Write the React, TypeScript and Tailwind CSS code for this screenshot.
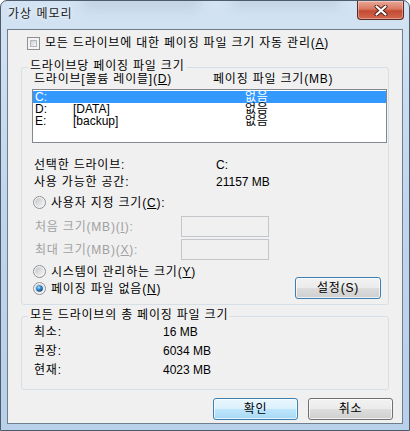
import React from "react";

const Radio = ({ checked = false }: { checked?: boolean }) => (
  <svg width="13" height="13" viewBox="0 0 13 13" className="shrink-0">
    <defs>
      <linearGradient id="rbIn" x1="0" y1="0" x2="1" y2="1">
        <stop offset="0" stopColor="#c3c6ca" />
        <stop offset="1" stopColor="#f7f7f7" />
      </linearGradient>
      <radialGradient id="rbDot" cx="0.4" cy="0.35" r="0.7">
        <stop offset="0" stopColor="#b9e3fb" />
        <stop offset="0.45" stopColor="#2a8ad4" />
        <stop offset="1" stopColor="#0f3f73" />
      </radialGradient>
    </defs>
    <circle cx="6.5" cy="6.5" r="6" fill="#f6f6f6" stroke="#8c8e90" />
    <circle cx="6.5" cy="6.5" r="4.5" fill="url(#rbIn)" />
    {checked && <circle cx="6.5" cy="6.5" r="3.3" fill="url(#rbDot)" />}
  </svg>
);

const Checkbox = () => (
  <div className="w-[13px] h-[13px] shrink-0 border border-[#8e8f8f] bg-[#f4f4f4] p-[2px]">
    <div className="w-full h-full border border-[#b3b8bd] bg-gradient-to-br from-[#cbcfd5] to-[#f7f7f7]" />
  </div>
);

const Mn = ({ children }: { children: React.ReactNode }) => (
  <span className="underline underline-offset-[1px]">{children}</span>
);

const Group = ({
  label,
  className,
  children,
}: {
  label: string;
  className: string;
  children: React.ReactNode;
}) => (
  <div className={`relative ml-[13px] w-[368px] border border-[#d5dfe5] rounded-[3px] ${className}`}>
    <span className="absolute left-[6px] top-[-8px] px-[2px] bg-[#f0f0f0] leading-[13px]">
      {label}
    </span>
    {children}
  </div>
);

const WinButton = ({
  children,
  variant = "normal",
  className = "",
}: {
  children: React.ReactNode;
  variant?: "normal" | "default" | "focus";
  className?: string;
}) => {
  const border =
    variant === "normal" ? "border-[#707070]" : "border-[#3c7fb1]";
  const fill =
    variant === "default"
      ? "bg-[linear-gradient(#eaf6fd_0%,#d9f0fc_50%,#bee6fd_51%,#a7d9f5_100%)]"
      : "bg-[linear-gradient(#f2f2f2_0%,#ebebeb_50%,#dddddd_51%,#cfcfcf_100%)]";
  return (
    <button
      className={`h-[22px] w-[85px] rounded-[3px] border ${border} ${fill} shadow-[inset_0_0_0_1px_rgba(255,255,255,0.7)] leading-[20px] text-center text-black ${className}`}
    >
      {children}
    </button>
  );
};

export default function App() {
  return (
    <div className="relative w-[410px] h-[431px] overflow-hidden rounded-t-[7px] border border-[#4d5b6b] bg-gradient-to-b from-[#d3e3f3] via-[#bfd5ec] to-[#b8d0e9] font-['Liberation_Sans','Noto_Sans_CJK_KR',sans-serif] text-[12px] tracking-[0.8px] text-black flex flex-col">
      <div className="absolute left-[80px] top-[-6px] w-[120px] h-[14px] rounded-full bg-[#9aa8b8] opacity-30 blur-[6px]" />
      <div className="absolute left-[230px] top-[-6px] w-[110px] h-[12px] rounded-full bg-[#9aa8b8] opacity-30 blur-[6px]" />

      {/* title bar */}
      <div className="relative flex h-[28px] items-start justify-between">
        <span className="pl-[7px] pt-[6px] leading-[14px] tracking-[1px] text-[#1a1a1a] [text-shadow:0_0_6px_#ffffff]">
          가상 메모리
        </span>
        <div className="mr-[5px] flex h-[19px] w-[47px] items-center justify-center rounded-b-[4px] border border-t-0 border-[#5a2a24] bg-[linear-gradient(#e9a99a_0%,#d9775f_45%,#c44a34_55%,#d3684e_100%)] shadow-[inset_0_0_0_1px_rgba(255,255,255,0.35)]">
          <svg width="14" height="11" viewBox="0 0 14 11">
            <path d="M2.5 1.5 L11.5 9.5 M11.5 1.5 L2.5 9.5" stroke="#4a1f1a" strokeWidth="4" strokeLinecap="round" />
            <path d="M2.5 1.5 L11.5 9.5 M11.5 1.5 L2.5 9.5" stroke="#ffffff" strokeWidth="2.2" strokeLinecap="round" />
          </svg>
        </div>
      </div>

      {/* client area */}
      <div className="ml-[6px] w-[396px] h-[395px] border border-[#6f7d8d] bg-[#f0f0f0] flex flex-col">
        <div className="mt-[7px] flex h-[13px] items-center gap-[5px] pl-[19px]">
          <Checkbox />
          <span className="leading-[13px]">
            모든 드라이브에 대한 페이징 파일 크기 자동 관리(<Mn>A</Mn>)
          </span>
        </div>

        <Group label="드라이브당 페이징 파일 크기" className="mt-[17px] h-[238px]">
          <div className="flex pt-[5px] pl-[12px] leading-[13px]">
            <span className="w-[179px]">
              드라이브[볼륨 레이블](<Mn>D</Mn>)
            </span>
            <span>페이징 파일 크기(MB)</span>
          </div>

          <div className="mt-[3px] ml-[10px] w-[355px] h-[54px] border border-[#828790] bg-white pt-[1px] leading-[12px]">
            {[
              ["C:", "", "없음"],
              ["D:", "[DATA]", "없음"],
              ["E:", "[backup]", "없음"],
            ].map(([d, l, s], i) => (
              <div
                key={d}
                className={`flex h-[12px] pl-[2px] tracking-normal ${i === 0 ? "bg-[#3399ff] text-white" : ""}`}
              >
                <span className="w-[38px]">{d}</span>
                <span className="w-[172px]">{l}</span>
                <span className="tracking-[0.8px]">{s}</span>
              </div>
            ))}
          </div>

          <div className="mt-[14px] pl-[12px] leading-[17px]">
            <div className="flex">
              <span className="w-[182px]">선택한 드라이브:</span>
              <span className="tracking-normal">C:</span>
            </div>
            <div className="flex">
              <span className="w-[182px]">사용 가능한 공간:</span>
              <span className="tracking-normal">21157 MB</span>
            </div>
          </div>

          <div className="mt-[3px] flex h-[17px] items-center gap-[5px] pl-[11px]">
            <Radio />
            <span>
              사용자 지정 크기(<Mn>C</Mn>):
            </span>
          </div>

          <div className="mt-[5px] flex h-[21px] items-center pl-[13px] text-[#a0a0a0]">
            <span className="w-[146px]">
              처음 크기(MB)(<Mn>I</Mn>):
            </span>
            <div className="h-[21px] w-[88px] border border-[#c3c6cb] bg-[#f0f0f0]" />
          </div>
          <div className="mt-[2px] flex h-[21px] items-center pl-[13px] text-[#a0a0a0]">
            <span className="w-[146px]">
              최대 크기(MB)(<Mn>X</Mn>):
            </span>
            <div className="h-[21px] w-[88px] border border-[#c3c6cb] bg-[#f0f0f0]" />
          </div>

          <div className="mt-[3px] flex items-start">
            <div className="flex flex-col pl-[11px]">
              <div className="flex h-[17px] items-center gap-[5px]">
                <Radio />
                <span>
                  시스템이 관리하는 크기(<Mn>Y</Mn>)
                </span>
              </div>
              <div className="flex h-[17px] items-center gap-[5px]">
                <Radio checked />
                <span>
                  페이징 파일 없음(<Mn>N</Mn>)
                </span>
              </div>
            </div>
            <WinButton variant="focus" className="ml-auto mr-[7px] mt-[14px] h-[21px] w-[86px]">
              설정(S)
            </WinButton>
          </div>
        </Group>

        <Group label="모든 드라이브의 총 페이징 파일 크기" className="mt-[11px] h-[74px]">
          <div className="pt-[6px] pl-[12px] leading-[19px]">
            {[
              ["최소:", "16 MB"],
              ["권장:", "6034 MB"],
              ["현재:", "4023 MB"],
            ].map(([k, v]) => (
              <div key={k} className="flex">
                <span className="w-[129px]">{k}</span>
                <span className="tracking-normal">{v}</span>
              </div>
            ))}
          </div>
        </Group>

        <div className="mt-[8px] flex justify-end gap-[10px] pr-[9px]">
          <WinButton variant="default">확인</WinButton>
          <WinButton>취소</WinButton>
        </div>
      </div>
    </div>
  );
}
